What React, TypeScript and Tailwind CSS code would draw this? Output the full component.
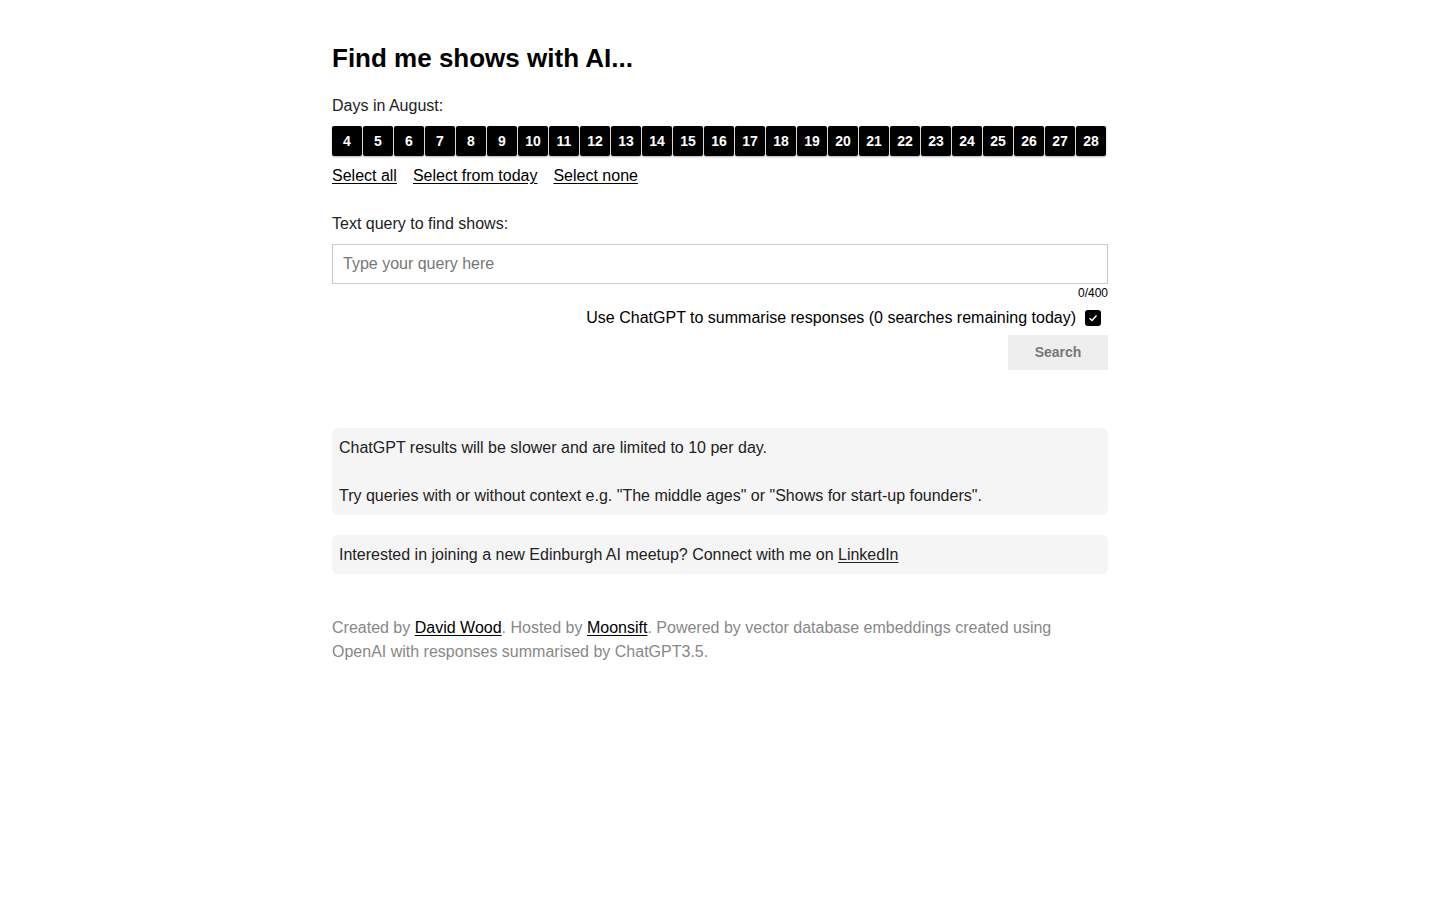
import React, { useState } from "react";

export default function App() {
  const days = Array.from({ length: 25 }, (_, i) => i + 4);
  const [checked, setChecked] = useState(true);
  return (
    <div className="min-h-screen bg-white text-black font-['Liberation_Sans',Arial,sans-serif]">
      <div className="mx-auto w-[776px] pt-[42px]">
        <h1 className="text-[26px] font-bold leading-[32px]">Find me shows with AI...</h1>
        <div className="mt-[20px] text-[16px] leading-[24px] text-[#222]">Days in August:</div>
        <div className="mt-[8px] flex gap-[1px]">
          {days.map((d) => (
            <button
              key={d}
              className="w-[30px] h-[30px] rounded-[2px] bg-black text-white text-[14px] font-bold flex items-center justify-center shadow-[0_1px_2px_rgba(0,0,0,0.3)]"
            >
              {d}
            </button>
          ))}
        </div>
        <div className="mt-[8px] flex gap-[16px] text-[16px] leading-[24px]">
          <a className="underline underline-offset-2 cursor-pointer">Select all</a>
          <a className="underline underline-offset-2 cursor-pointer">Select from today</a>
          <a className="underline underline-offset-2 cursor-pointer">Select none</a>
        </div>
        <div className="mt-[24px] text-[16px] leading-[24px] text-[#222]">Text query to find shows:</div>
        <input
          className="mt-[8px] block w-full h-[40px] border border-[#ccc] px-[10px] text-[16px] placeholder:text-[#777] outline-none"
          placeholder="Type your query here"
        />
        <div className="mt-[2px] text-right text-[12px] leading-[14px]">0/400</div>
        <div className="mt-[6px] flex items-center justify-end gap-[9px] pr-[7px] text-[16px] leading-[24px]">
          <span>Use ChatGPT to summarise responses (0 searches remaining today)</span>
          <button
            onClick={() => setChecked(!checked)}
            className="w-[16px] h-[16px] rounded-[3px] bg-black flex items-center justify-center"
          >
            {checked && (
              <svg width="10" height="10" viewBox="0 0 10 10">
                <path d="M1.5 5.2 L4 7.5 L8.5 2.5" stroke="white" strokeWidth="1.4" fill="none" />
              </svg>
            )}
          </button>
        </div>
        <div className="mt-[5px] flex justify-end">
          <button className="w-[100px] h-[35px] bg-[#eeeeee] text-[#777] text-[14px] font-bold">Search</button>
        </div>
        <div className="mt-[58px] rounded-[6px] bg-[#f5f5f5] px-[7px] pt-[8px] pb-[7px] text-[16px] leading-[24px] text-[#222]">
          <p>ChatGPT results will be slower and are limited to 10 per day.</p>
          <p className="mt-[24px]">
            Try queries with or without context e.g. "The middle ages" or "Shows for start-up founders".
          </p>
        </div>
        <div className="mt-[20px] rounded-[6px] bg-[#f5f5f5] px-[7px] pt-[8px] pb-[7px] text-[16px] leading-[24px] text-[#222]">
          Interested in joining a new Edinburgh AI meetup? Connect with me on{" "}
          <a className="underline underline-offset-2 cursor-pointer">LinkedIn</a>
        </div>
        <p className="mt-[42px] text-[16px] leading-[24px] text-[#888]">
          Created by <a className="text-black underline underline-offset-2 cursor-pointer">David Wood</a>. Hosted by{" "}
          <a className="text-black underline underline-offset-2 cursor-pointer">Moonsift</a>. Powered by vector database
          embeddings created using OpenAI with responses summarised by ChatGPT3.5.
        </p>
      </div>
    </div>
  );
}
